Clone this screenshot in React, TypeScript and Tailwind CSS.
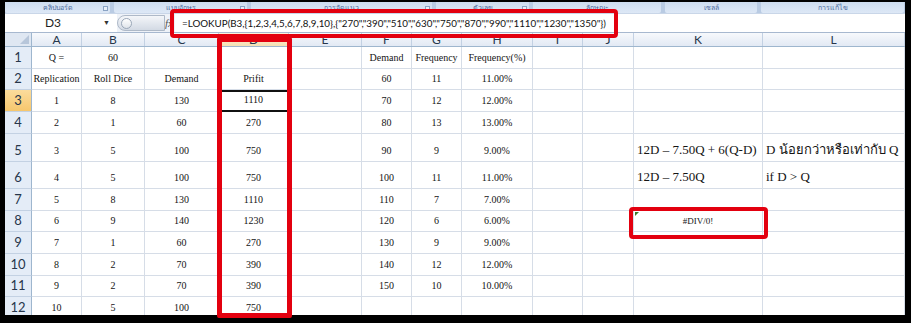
import React from "react";

const GRID =
  "grid grid-cols-[27px_50px_63px_74px_70px_73px_50px_50px_71px_50px_51px_129px_142px]";

const SERIF = "font-['Liberation_Serif','Times_New_Roman',serif]";
const SANS = "font-['Lato','Liberation_Sans',sans-serif]";

type Row = { n: number; h: string; cells: string[] };

const rows: Row[] = [
  { n: 1, h: "h-[22px]", cells: ["Q =", "60", "", "", "", "Demand", "Frequency", "Frequency(%)"] },
  { n: 2, h: "h-[21px]", cells: ["Replication", "Roll Dice", "Demand", "Prifit", "", "60", "11", "11.00%"] },
  { n: 3, h: "h-[22px]", cells: ["1", "8", "130", "1110", "", "70", "12", "12.00%"] },
  { n: 4, h: "h-[22px]", cells: ["2", "1", "60", "270", "", "80", "13", "13.00%"] },
  {
    n: 5,
    h: "h-[28px]",
    cells: ["3", "5", "100", "750", "", "90", "9", "9.00%", "", "", "12D – 7.50Q + 6(Q-D)", "D น้อยกว่าหรือเท่ากับ Q"],
  },
  {
    n: 6,
    h: "h-[27px]",
    cells: ["4", "5", "100", "750", "", "100", "11", "11.00%", "", "", "12D – 7.50Q", "if D > Q"],
  },
  { n: 7, h: "h-[22px]", cells: ["5", "8", "130", "1110", "", "110", "7", "7.00%"] },
  { n: 8, h: "h-[21px]", cells: ["6", "9", "140", "1230", "", "120", "6", "6.00%", "", "", "#DIV/0!"] },
  { n: 9, h: "h-[22px]", cells: ["7", "1", "60", "270", "", "130", "9", "9.00%"] },
  { n: 10, h: "h-[22px]", cells: ["8", "2", "70", "390", "", "140", "12", "12.00%"] },
  { n: 11, h: "h-[21px]", cells: ["9", "2", "70", "390", "", "150", "10", "10.00%"] },
  { n: 12, h: "h-[22px]", cells: ["10", "5", "100", "750"] },
];

const letters = ["A", "B", "C", "D", "E", "F", "G", "H", "I", "J", "K", "L"];

const groups = [
  { w: "w-[105px]", label: "คลิปบอร์ด" },
  { w: "w-[133px]", label: "แบบอักษร" },
  { w: "w-[181px]", label: "การจัดแนว" },
  { w: "w-[93px]", label: "ตัวเลข" },
  { w: "w-[128px]", label: "ลักษณะ" },
  { w: "w-[92px]", label: "เซลล์" },
  { w: "w-[143px]", label: "การแก้ไข" },
];

function Cell({ row, col, value }: { row: number; col: number; value: string }) {
  const active = row === 3 && col === 3;
  const base = "relative flex items-end border-r border-b border-[#d6dde7] text-[#141414]";
  if (col === 10 && value === "#DIV/0!") {
    return (
      <div className={`${base} justify-center pb-[4px] text-[9px] leading-[12px] ${SERIF}`}>
        <span className="absolute left-[1px] top-[1px] h-0 w-0 border-r-[4px] border-t-[4px] border-r-transparent border-t-[#3b7a2a]" />
        {value}
      </div>
    );
  }
  if (col >= 10) {
    return (
      <div className={`${base} pb-[4px] pl-[3px] text-[13px] leading-[15px] whitespace-nowrap ${SERIF}`}>
        {value}
      </div>
    );
  }
  return (
    <div
      className={`${base} justify-center pb-[4px] text-[10px] leading-[13px] ${SERIF} ${
        active ? "border-t-2 border-t-[#111] border-b-2 border-b-[#111]" : ""
      }`}
    >
      {value}
    </div>
  );
}

export default function App() {
  return (
    <div className="relative h-[323px] w-[911px] overflow-hidden bg-black pl-[5px] pt-[2px]">
      <div className="flex h-[313px] w-[900px] flex-col overflow-hidden bg-white">
        {/* ribbon group labels */}
        <div className="flex h-[11px] shrink-0 gap-[4px] bg-[#b9cbe3]">
          {groups.map((g, i) => (
            <div
              key={i}
              className={`${g.w} relative flex items-center justify-center rounded-b-[2px] bg-gradient-to-b from-[#cddcef] to-[#dde8f6]`}
            >
              <span className="text-[7px] leading-[9px] text-[#4a6a9c] font-['Noto_Sans','DejaVu_Sans',sans-serif]">
                {g.label}
              </span>
              {i < 4 && (
                <span className="absolute bottom-[2px] right-[2px] h-[5px] w-[5px] border border-[#8aa3c4] bg-[#e8eff8]" />
              )}
            </div>
          ))}
        </div>

        {/* formula bar */}
        <div className="flex h-[20px] shrink-0 items-stretch border-t border-t-[#c9d6e8] border-b border-b-[#a7b8cf] bg-[#eef2f8]">
          <div className="flex w-[112px] items-center bg-white">
            <span className={`w-[96px] text-center text-[12px] text-[#1e1e1e] ${SANS}`}>D3</span>
            <span className="ml-[2px] text-[7px] text-[#333]">▼</span>
          </div>
          <div className="my-[1px] flex w-[48px] items-center rounded-l-full border border-[#aeb9c8] bg-gradient-to-b from-[#f4f6f9] to-[#d3dae4] pl-[3px]">
            <span className="h-[11px] w-[11px] rounded-full border border-[#9aa7b8] bg-gradient-to-b from-white to-[#dfe4ea]" />
          </div>
          <div className="flex w-[10px] items-center text-[11px] italic text-[#555] font-['Liberation_Serif',serif]">
            fx
          </div>
          <div className={`flex flex-1 items-center bg-white pl-[7px] text-[9.8px] text-[#111] whitespace-nowrap ${SANS}`}>
            =LOOKUP(B3,{"{"}1,2,3,4,5,6,7,8,9,10{"}"},{"{"}"270","390","510","630","750","870","990","1110","1230","1350"{"}"})
          </div>
        </div>

        {/* column headers */}
        <div className={`${GRID} h-[14px] shrink-0 border-b border-b-[#9eb6ce]`}>
          <div className="relative border-r border-r-[#9eb6ce] bg-[#dfe7f2]">
            <span className="absolute bottom-[2px] right-[2px] h-0 w-0 border-b-[9px] border-l-[9px] border-b-[#b7c6da] border-l-transparent" />
          </div>
          {letters.map((l) => (
            <div
              key={l}
              className={`flex items-center justify-center border-r border-r-[#c3d1e3] text-[12px] leading-none text-[#27364b] ${SANS} ${
                l === "D" ? "bg-gradient-to-b from-[#fbf0da] to-[#f6e0b4]" : "bg-gradient-to-b from-[#f7f9fc] to-[#e2e9f4]"
              }`}
            >
              {l}
            </div>
          ))}
        </div>

        {/* rows */}
        {rows.map((r) => (
          <div key={r.n} className={`${GRID} ${r.h} shrink-0`}>
            <div
              className={`flex items-end justify-center border-r border-r-[#9eb6ce] border-b border-b-[#c3d1e3] pb-[4px] text-[13px] leading-[14px] text-[#27364b] ${SANS} ${
                r.n === 3 ? "bg-gradient-to-b from-[#fbdc9c] to-[#f6c76d]" : "bg-[#e4ecf7]"
              }`}
            >
              {r.n}
            </div>
            {letters.map((_, c) => (
              <Cell key={c} row={r.n} col={c} value={r.cells[c] ?? ""} />
            ))}
          </div>
        ))}
      </div>

      {/* red highlight boxes */}
      <div className="absolute left-[170px] top-[9px] h-[29px] w-[448px] rounded-[4px] border-[4px] border-[#e3000f]" />
      <div className="absolute left-[217px] top-[37px] h-[281px] w-[75px] rounded-[2px] border-[5px] border-[#e3000f]" />
      <div className="absolute left-[629px] top-[207px] h-[32px] w-[139px] rounded-[4px] border-[4px] border-[#e3000f]" />
    </div>
  );
}
